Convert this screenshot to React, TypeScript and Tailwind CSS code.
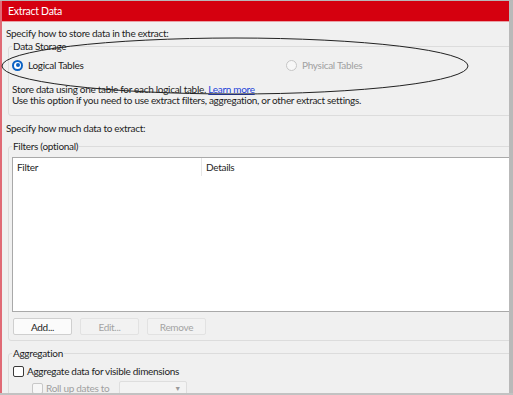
function Radio({ checked }: { checked?: boolean }) {
  return checked ? (
    <span className="flex h-[11px] w-[11px] items-center justify-center rounded-full bg-[#0b62c4]">
      <span className="flex h-[7px] w-[7px] items-center justify-center rounded-full bg-white">
        <span className="h-[4px] w-[4px] rounded-full bg-[#0b62c4]" />
      </span>
    </span>
  ) : (
    <span className="h-[11px] w-[11px] rounded-full border border-[#c6c6c6] bg-[#f7f7f7]" />
  );
}

function Btn({ label, disabled }: { label: string; disabled?: boolean }) {
  return (
    <div
      className={
        disabled
          ? "flex h-[17px] w-[59px] items-center justify-center rounded-[2px] border border-[#e2e2e2] bg-[#f2f2f2] text-[#a3a3a3]"
          : "flex h-[17px] w-[59px] items-center justify-center rounded-[2px] border border-[#cfcfcf] bg-[#fbfbfb] text-[#1e1e1e]"
      }
    >
      {label}
    </div>
  );
}

export default function App() {
  return (
    <div className="relative flex h-[395px] w-[513px] flex-col overflow-hidden bg-[#f0f0f0] font-['Lato',sans-serif] text-[10px] leading-[14px] tracking-[-0.3px] text-[#1e1e1e]">
      <div className="h-px bg-[#b8b8b8]" />
      <div className="flex min-h-0 flex-1">
        <div className="w-[2px] bg-[#e06a75]" />
        <div className="flex min-w-0 flex-1 flex-col overflow-hidden">
          {/* Title bar */}
          <div className="h-[20px] shrink-0 bg-[#d5000f] pl-[6px] text-[10.5px] leading-[20px] text-white">
            Extract Data
          </div>
          <div className="h-px shrink-0 bg-[#e9a0a6]" />

          <div className="pl-[4px]">
            <div className="mt-[4px]">Specify how to store data in the extract:</div>
          </div>

          {/* Data Storage */}
          <fieldset className="ml-[6px] mr-[-10px] mt-[-1px] rounded-[3px] border border-[#dcdcdc] px-[3px] pb-[9px]">
            <legend className="px-[1px]">Data Storage</legend>
            <div className="mt-[2px] flex h-[20px] items-center">
              <div className="flex w-[274px] items-center gap-[5px]">
                <Radio checked />
                <span>Logical Tables</span>
              </div>
              <div className="flex items-center gap-[5px] text-[#a0a0a0]">
                <Radio />
                <span>Physical Tables</span>
              </div>
            </div>
            <div className="mt-[9px] whitespace-nowrap leading-[11px]">
              <div>
                Store data using one table for each logical table.{" "}
                <span className="text-[#1c3fd8] underline">Learn more</span>
              </div>
              <div>Use this option if you need to use extract filters, aggregation, or other extract settings.</div>
            </div>
          </fieldset>

          <div className="mt-[5px] pl-[4px]">Specify how much data to extract:</div>

          {/* Filters */}
          <fieldset className="ml-[6px] mr-[-10px] mt-[4px] rounded-[3px] border border-[#dcdcdc] px-[3px] pb-[5px]">
            <legend className="px-[1px]">Filters (optional)</legend>
            <div className="mt-[4px] h-[155px] border border-[#a9a9a9] bg-white">
              <div className="flex h-[18px] items-center">
                <div className="flex h-full w-[189px] items-center border-r border-[#e6e6e6] pl-[4px]">Filter</div>
                <div className="pl-[4px]">Details</div>
              </div>
            </div>
            <div className="ml-[1px] mt-[6px] flex gap-[8px]">
              <Btn label="Add..." />
              <Btn label="Edit..." disabled />
              <Btn label="Remove" disabled />
            </div>
          </fieldset>

          {/* Aggregation */}
          <fieldset className="ml-[6px] mr-[-10px] mt-[5px] rounded-[3px] border border-[#dcdcdc] px-[3px] pb-[6px]">
            <legend className="px-[1px]">Aggregation</legend>
            <div className="mt-[3px] flex h-[16px] items-center gap-[3px] pl-[1px]">
              <span className="h-[11px] w-[11px] rounded-[2px] border border-[#3a3a3a] bg-white" />
              <span>Aggregate data for visible dimensions</span>
            </div>
            <div className="mt-[1px] flex h-[16px] items-center whitespace-nowrap pl-[20px]">
              <span className="h-[11px] w-[11px] rounded-[2px] border border-[#c8c8c8] bg-[#f7f7f7]" />
              <span className="ml-[3px] w-[73px] text-[#a0a0a0]">Roll up dates to</span>
              <div className="flex h-[14px] w-[68px] items-center justify-end rounded-[2px] border border-[#dedede] bg-[#f3f3f3] pr-[5px] text-[7px] text-[#9a9a9a]">
                ▼
              </div>
            </div>
          </fieldset>
        </div>
        <div className="w-[4px] bg-[#b9b9b9]" />
      </div>
      <div className="h-[2px] bg-[#c2c2c2]" />

      {/* hand-drawn annotation */}
      <svg className="pointer-events-none absolute left-0 top-0" width="513" height="395">
        <ellipse cx="235" cy="66" rx="233" ry="28" fill="none" stroke="#222" strokeWidth="1" />
      </svg>
    </div>
  );
}
